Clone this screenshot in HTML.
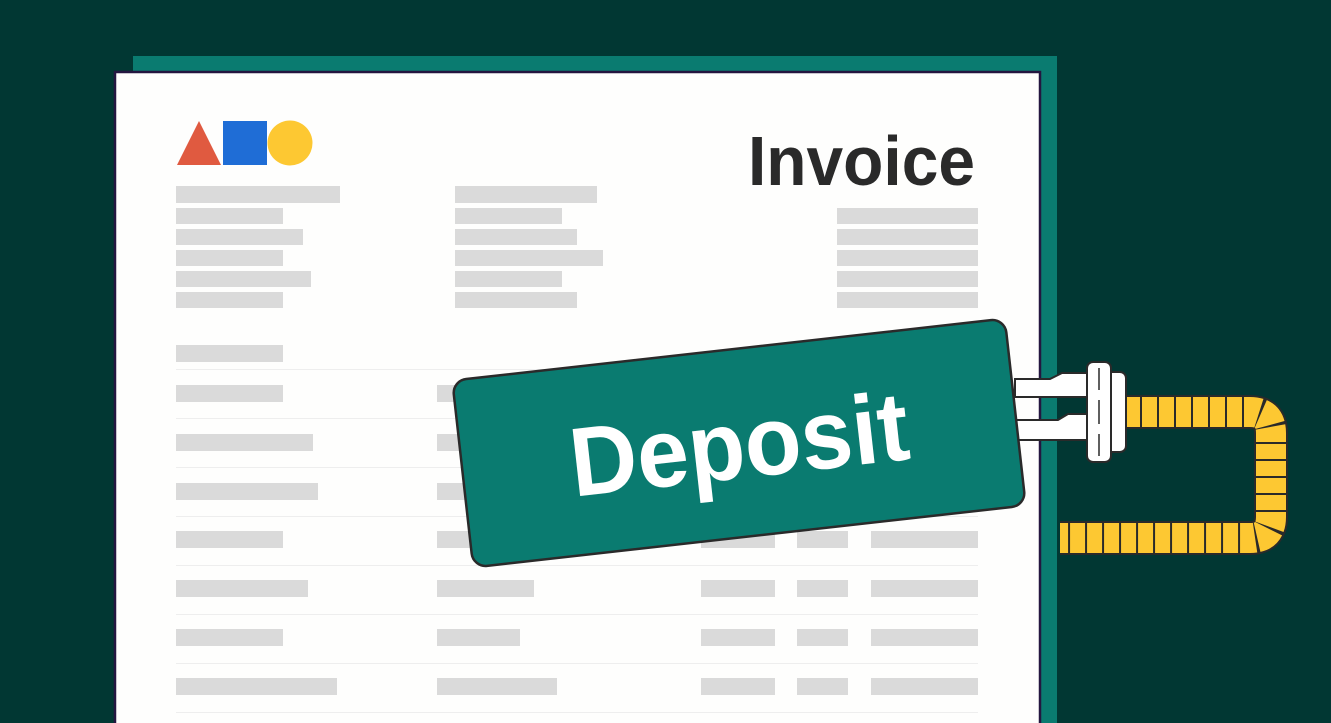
<!DOCTYPE html>
<html><head><meta charset="utf-8"><style>
html,body{margin:0;padding:0;background:#013733;}
svg{display:block;}
</style></head><body>
<svg width="1331" height="723" viewBox="0 0 1331 723" xmlns="http://www.w3.org/2000/svg" font-family="Liberation Sans, sans-serif">
<rect width="1331" height="723" fill="#013733"/>
<rect x="133" y="56" width="924" height="680" fill="#0a7b70"/>
<rect x="115" y="72" width="925" height="670" fill="#fefefd" stroke="#241640" stroke-width="2.5"/>
<polygon points="177,165 199,121 221,165" fill="#e05a40"/>
<rect x="223" y="121" width="44" height="44" fill="#1f6dd6"/>
<circle cx="290" cy="143" r="22.5" fill="#fdc832"/>
<text x="748" y="185" font-size="70" font-weight="bold" fill="#2a2a2a" textLength="227" lengthAdjust="spacingAndGlyphs">Invoice</text>
<g fill="#dadada">
<rect x="176" y="186" width="164" height="17"/><rect x="176" y="208" width="107" height="16"/><rect x="176" y="229" width="127" height="16"/><rect x="176" y="250" width="107" height="16"/><rect x="176" y="271" width="135" height="16"/><rect x="176" y="292" width="107" height="16"/>
<rect x="455" y="186" width="142" height="17"/><rect x="455" y="208" width="107" height="16"/><rect x="455" y="229" width="122" height="16"/><rect x="455" y="250" width="148" height="16"/><rect x="455" y="271" width="107" height="16"/><rect x="455" y="292" width="122" height="16"/>
<rect x="837" y="208" width="141" height="16"/><rect x="837" y="229" width="141" height="16"/><rect x="837" y="250" width="141" height="16"/><rect x="837" y="271" width="141" height="16"/><rect x="837" y="292" width="141" height="16"/>
<rect x="176" y="345" width="107" height="17"/>
<rect x="176" y="385" width="107" height="17"/><rect x="176" y="434" width="137" height="17"/><rect x="176" y="483" width="142" height="17"/><rect x="176" y="531" width="107" height="17"/><rect x="176" y="580" width="132" height="17"/><rect x="176" y="629" width="107" height="17"/><rect x="176" y="678" width="161" height="17"/>
<rect x="437" y="385" width="40" height="17"/><rect x="437" y="434" width="40" height="17"/><rect x="437" y="483" width="40" height="17"/><rect x="437" y="531" width="40" height="17"/>
<rect x="437" y="580" width="97" height="17"/><rect x="437" y="629" width="83" height="17"/><rect x="437" y="678" width="120" height="17"/>
<rect x="701" y="531" width="74" height="17"/><rect x="797" y="531" width="51" height="17"/><rect x="871" y="531" width="107" height="17"/>
<rect x="701" y="580" width="74" height="17"/><rect x="797" y="580" width="51" height="17"/><rect x="871" y="580" width="107" height="17"/>
<rect x="701" y="629" width="74" height="17"/><rect x="797" y="629" width="51" height="17"/><rect x="871" y="629" width="107" height="17"/>
<rect x="701" y="678" width="74" height="17"/><rect x="797" y="678" width="51" height="17"/><rect x="871" y="678" width="107" height="17"/>
</g>
<g fill="#eeeeee">
<rect x="176" y="369" width="802" height="1"/><rect x="176" y="418" width="802" height="1"/><rect x="176" y="467" width="802" height="1"/><rect x="176" y="516" width="802" height="1"/><rect x="176" y="565" width="802" height="1"/><rect x="176" y="614" width="802" height="1"/><rect x="176" y="663" width="802" height="1"/><rect x="176" y="712" width="802" height="1"/>
</g>
<path d="M1125,412 H1250 Q1271,412 1271,433 V517 Q1271,538 1250,538 H1060" fill="none" stroke="#2a2a2a" stroke-width="34"/>
<path d="M1125,412 H1250 Q1271,412 1271,433 V517 Q1271,538 1250,538 H1060" fill="none" stroke="#fdc832" stroke-width="30" stroke-dasharray="15 2"/>
<path d="M1015,379 H1050 L1062,373 H1090 V397 H1015 Z" fill="#fff" stroke="#2a2a2a" stroke-width="2"/>
<path d="M997,420 H1058 L1068,414 H1090 V440 H997 A10,10 0 0 1 997,420 Z" fill="#fff" stroke="#2a2a2a" stroke-width="2"/>
<rect x="1098" y="372" width="28" height="80" rx="6" fill="#fff" stroke="#2a2a2a" stroke-width="2"/>
<rect x="1087" y="362" width="24" height="100" rx="6" fill="#fff" stroke="#2a2a2a" stroke-width="2"/>
<path d="M1099,368 V390 M1099,400 V424 M1099,434 V456" stroke="#2a2a2a" stroke-width="1.5"/>
<g transform="translate(739,443) rotate(-6.4)">
<rect x="-278" y="-94" width="556" height="188" rx="14" fill="#0a7b70" stroke="#2a2a2a" stroke-width="2.5"/>
<text x="0" y="35" text-anchor="middle" font-size="98" font-weight="bold" fill="#fff" textLength="340" lengthAdjust="spacingAndGlyphs">Deposit</text>
</g>
</svg>
</body></html>
